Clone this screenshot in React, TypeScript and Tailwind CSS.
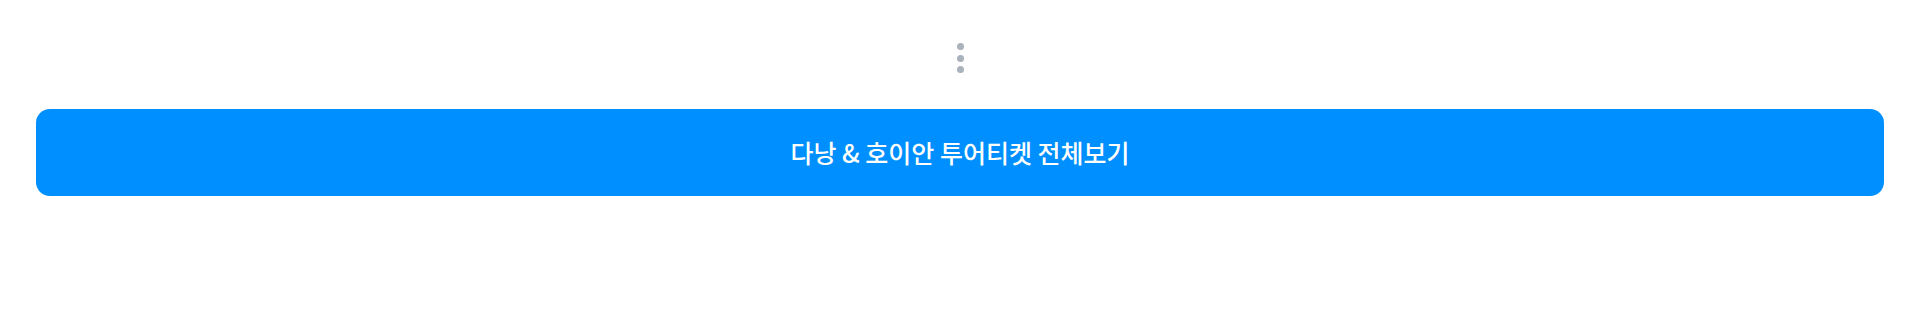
export default function App() {
  return (
    <div
      className="w-full h-[328px] bg-white flex flex-col items-center pt-[43px]"
      style={{ fontFamily: '"Noto Sans CJK KR", "Noto Sans", sans-serif' }}
    >
      {/* 더보기 점 */}
      <div className="flex flex-col items-center gap-[4.5px]">
        <span className="block w-[7px] h-[7px] rounded-full bg-[#a9b1bb]" />
        <span className="block w-[7px] h-[7px] rounded-full bg-[#a9b1bb]" />
        <span className="block w-[7px] h-[7px] rounded-full bg-[#a9b1bb]" />
      </div>

      <div className="w-full px-[36px] mt-[36px]">
        <button className="w-full h-[87px] rounded-[14px] bg-[#008ffe] text-white text-[25px] font-medium flex items-center justify-center">
          다낭 &amp; 호이안 투어티켓 전체보기
        </button>
      </div>
    </div>
  );
}
